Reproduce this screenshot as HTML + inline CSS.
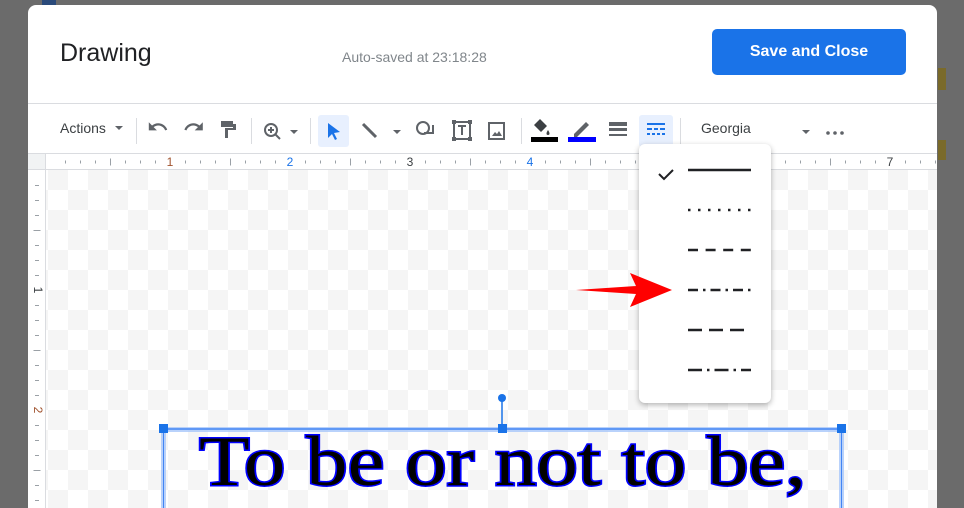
<!DOCTYPE html>
<html><head><meta charset="utf-8"><style>
*{margin:0;padding:0;box-sizing:border-box}
html,body{width:964px;height:508px;overflow:hidden}
body{background:#6b6b6b;font-family:"Liberation Sans",sans-serif;position:relative}
.dlg{position:absolute;left:28px;top:5px;width:909px;height:503px;background:#fff;border-radius:8px 8px 0 0;overflow:hidden}
.abs{position:absolute}
.canvas{position:absolute;left:18px;top:165px;right:0;bottom:0;background-color:#fff;
background-image:conic-gradient(#f5f5f5 25%,#fff 0 50%,#f5f5f5 0 75%,#fff 0);background-size:40px 40px;background-position:22px 0}
</style></head><body>
<div class="abs" style="left:42px;top:0;width:14px;height:5px;background:#2a4a7a"></div>
<div class="abs" style="left:938px;top:68px;width:8px;height:22px;background:#7a6a2a"></div>
<div class="abs" style="left:938px;top:140px;width:8px;height:20px;background:#7a6a2a"></div>
<div class="dlg">
 <div class="abs" style="left:32px;top:34px;font-size:25px;color:#202124">Drawing</div>
 <div class="abs" style="left:314px;top:44px;font-size:14px;color:#80868b">Auto-saved at 23:18:28</div>
 <div class="abs" style="left:684px;top:24px;width:194px;height:46px;background:#1a73e8;border-radius:5px;color:#fff;font-size:16px;font-weight:bold;text-align:center;line-height:46px">Save and Close</div>
 <div class="abs" style="left:0;top:98px;width:909px;height:1px;background:#dadce0"></div>
 <div class="abs" style="left:32px;top:115px;font-size:14px;color:#3c4043">Actions</div>
 <svg class="abs" style="left:0;top:98px" width="909" height="50">
  <path d="M87 23l4 4 4-4z" fill="#5f6368"/>
  <g fill="#dadce0"><rect x="108" y="15" width="1" height="26"/><rect x="223" y="15" width="1" height="26"/><rect x="282" y="15" width="1" height="26"/><rect x="493" y="15" width="1" height="26"/><rect x="652" y="15" width="1" height="26"/></g>
  <path transform="translate(119,13) scale(0.9)" d="M12.5 8c-2.65 0-5.05.99-6.9 2.6L2 7v9h9l-3.62-3.62c1.39-1.16 3.16-1.88 5.12-1.88 3.54 0 6.55 2.31 7.6 5.5l2.37-.78C21.08 11.03 17.15 8 12.5 8z" fill="#5f6368"/>
  <path transform="translate(155,13) scale(0.9)" d="M18.4 10.6C16.55 8.99 14.15 8 11.5 8c-4.65 0-8.58 3.03-9.96 7.22L3.9 16c1.05-3.19 4.05-5.5 7.6-5.5 1.95 0 3.73.72 5.12 1.88L13 16h9V7l-3.6 3.6z" fill="#5f6368"/>
  <path d="M193 18h12v6h-12zM205 21h3v6h-8v8h-3v-10h8z" fill="#5f6368"/>
  <circle cx="243" cy="27" r="6" stroke="#5f6368" stroke-width="2" fill="none"/><path d="M247 31l5 5M240 27h6M243 24v6" stroke="#5f6368" stroke-width="2"/>
  <path d="M262 27l4 4 4-4z" fill="#5f6368"/>
  <rect x="290" y="12" width="31" height="32" rx="3" fill="#e8f0fe"/>
  <path d="M300 20l12 9-6 1 3 6-2 1-3-6-4 4z" fill="#1a73e8"/>
  <path d="M335 21l13 13" stroke="#5f6368" stroke-width="3"/>
  <path d="M365 27l4 4 4-4z" fill="#5f6368"/>
  <circle cx="395" cy="25" r="6" stroke="#5f6368" stroke-width="2" fill="none"/><path d="M396 30h9v-8" stroke="#5f6368" stroke-width="2" fill="none"/>
  <rect x="426" y="19" width="16" height="17" stroke="#5f6368" stroke-width="2" fill="none"/><path d="M430 23h8M434 23v9" stroke="#5f6368" stroke-width="2"/>
  <g fill="#5f6368"><rect x="424" y="17" width="4" height="4"/><rect x="440" y="17" width="4" height="4"/><rect x="424" y="34" width="4" height="4"/><rect x="440" y="34" width="4" height="4"/></g>
  <rect x="461" y="20" width="15" height="16" stroke="#5f6368" stroke-width="2" fill="none"/><path d="M464 33l3-4 2 2 2-3 3 5z" fill="#5f6368"/>
  <path d="M506 22l6-6 7 7-6 6zM520 27c2 3 2 5 0 5s-2-2 0-5z" fill="#3c4043"/>
  <rect x="503" y="34" width="27" height="5" fill="#000"/>
  <path d="M546 31l12-12 3 3-12 12h-3z" fill="#5f6368"/>
  <rect x="540" y="34" width="28" height="5" fill="#0000ff"/>
  <g fill="#5f6368"><rect x="581" y="19" width="18" height="4"/><rect x="581" y="25" width="18" height="3"/><rect x="581" y="31" width="18" height="2"/></g>
  <rect x="611" y="12" width="34" height="32" rx="3" fill="#e8f0fe"/>
  <g fill="#1a73e8"><rect x="619" y="20" width="18" height="2"/><rect x="619" y="25" width="5" height="2"/><rect x="626" y="25" width="4" height="2"/><rect x="632" y="25" width="5" height="2"/><rect x="619" y="30" width="3" height="2"/><rect x="624" y="30" width="3" height="2"/><rect x="629" y="30" width="3" height="2"/><rect x="634" y="30" width="3" height="2"/></g>
  <path d="M774 27l4 4 4-4z" fill="#5f6368"/>
  <g fill="#5f6368"><circle cx="800" cy="30" r="1.8"/><circle cx="807" cy="30" r="1.8"/><circle cx="814" cy="30" r="1.8"/></g>
 </svg>
 <div class="abs" style="left:673px;top:115px;font-size:14px;color:#3c4043">Georgia</div>
 <div class="abs" style="left:0;top:148px;width:909px;height:1px;background:#dadce0"></div>
 <div class="abs" style="left:0;top:149px;width:18px;height:16px;background:#f1f3f4"></div>
 <div class="abs" style="left:0;top:164px;width:909px;height:1px;background:#dadce0"></div>
 <div class="abs" style="left:17px;top:149px;width:1px;height:360px;background:#dadce0"></div>
 <svg class="abs" style="left:0;top:149px" width="909" height="16">
  <g fill="#9aa0a6" id="ht"></g>
  <g font-size="12" font-family="Liberation Sans" fill="#3c4043" text-anchor="middle">
   <text x="142" y="12" fill="#a0522d">1</text><text x="262" y="12" fill="#1a73e8">2</text><text x="382" y="12">3</text><text x="502" y="12" fill="#1a73e8">4</text><text x="862" y="12">7</text>
  </g>
 </svg>
 <svg class="abs" style="left:0;top:165px" width="18" height="338">
  <g font-size="12" font-family="Liberation Sans" fill="#3c4043">
   <text x="0" y="0" transform="translate(6,120) rotate(90)" text-anchor="middle">1</text>
   <text x="0" y="0" transform="translate(6,240) rotate(90)" text-anchor="middle" fill="#a0522d">2</text>
  </g>
  <g id="vt" fill="#9aa0a6"></g>
 </svg>
 <div class="canvas"></div>
 <svg class="abs" style="left:0;top:0" width="909" height="503">
  <line x1="474" y1="393" x2="474" y2="424" stroke="#1a73e8" stroke-width="1.5"/>
  <circle cx="474" cy="393" r="4" fill="#1a73e8"/>
  <rect x="135" y="422" width="680" height="5" fill="#a8c7fa" opacity=".8"/>
  <line x1="135" y1="424" x2="814" y2="424" stroke="#4285f4" stroke-width="1.5"/>
  <rect x="133" y="427" width="5" height="80" fill="#a8c7fa" opacity=".8"/>
  <rect x="811" y="427" width="5" height="80" fill="#a8c7fa" opacity=".8"/>
  <line x1="135.5" y1="424" x2="135.5" y2="503" stroke="#4285f4"/>
  <line x1="813.5" y1="424" x2="813.5" y2="503" stroke="#4285f4"/>
  <rect x="131" y="419" width="9" height="9" fill="#1a73e8"/>
  <rect x="470" y="419" width="9" height="9" fill="#1a73e8"/>
  <rect x="809" y="419" width="9" height="9" fill="#1a73e8"/>
  <text x="171" y="480" font-family="'Liberation Serif',serif" font-size="71" textLength="607" lengthAdjust="spacingAndGlyphs" fill="#000" stroke="#0000ff" stroke-width="3" paint-order="stroke">To be or not to be,</text>
 </svg>
 <div class="abs" style="left:611px;top:139px;width:132px;height:259px;background:#fff;border-radius:6px;box-shadow:0 2px 6px rgba(0,0,0,.3)"></div>
 <svg class="abs" style="left:611px;top:139px" width="132" height="259">
  <path d="M20 30l5 5 9-9" stroke="#202124" stroke-width="2" fill="none"/>
  <line x1="49" y1="26" x2="112" y2="26" stroke="#202124" stroke-width="2.5"/>
  <line x1="49" y1="66" x2="112" y2="66" stroke="#202124" stroke-width="2.5" stroke-dasharray="2.5 7.5"/>
  <line x1="49" y1="106" x2="112" y2="106" stroke="#202124" stroke-width="2.5" stroke-dasharray="10 7.6"/>
  <line x1="49" y1="146" x2="112" y2="146" stroke="#202124" stroke-width="2.5" stroke-dasharray="10 5 2.5 5"/>
  <line x1="49" y1="186" x2="112" y2="186" stroke="#202124" stroke-width="2.5" stroke-dasharray="14 7"/>
  <line x1="49" y1="226" x2="112" y2="226" stroke="#202124" stroke-width="2.5" stroke-dasharray="14 5 2.5 5"/>
 </svg>
</div>
<svg class="abs" style="left:0;top:0" width="964" height="508">
 <path d="M576 290l60-4-6-13 42 17-42 17 6-13z" fill="#ff0000"/>
</svg>
<script>
var h=document.getElementById('ht'),s='';
for(var x=22;x<909;x+=15){var i=Math.round((x-22)/15)%8;if(i==0)continue;var t=i==4?7:3;s+='<rect x="'+x+'" y="'+(8-t/2)+'" width="1" height="'+t+'"/>';}
h.innerHTML=s;
var v=document.getElementById('vt');s='';
for(var y=15;y<338;y+=15){var i=(y/15)%8;if(i==0)continue;var w=i==4?7:4;s+='<rect x="'+(9-w/2)+'" y="'+y+'" width="'+w+'" height="1"/>';}
v.innerHTML=s;
</script>
</body></html>
